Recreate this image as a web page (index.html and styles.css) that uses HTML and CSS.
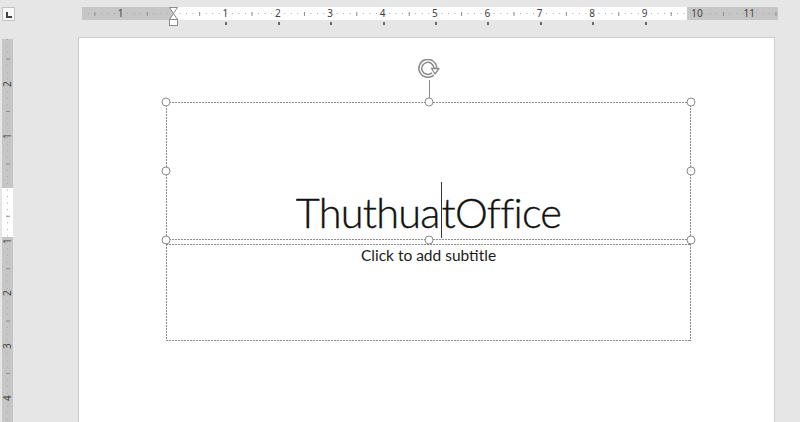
FILE: index.html
```html
<!DOCTYPE html>
<html lang="en">
<head>
    <meta charset="UTF-8">
    <title>ThuthuatOffice</title>
    <link rel="stylesheet" href="styles.css">
</head>
<body>
    <div class="top">
        <div class="corner"><span class="corner-mark"></span></div>
        <div class="hruler-wrap">
            <div class="hruler">
                <div class="hnums">
                    <span>1</span><span></span><span>1</span><span>2</span><span>3</span><span>4</span><span>5</span>
                    <span>6</span><span>7</span><span>8</span><span>9</span><span>10</span><span>11</span>
                </div>
            </div>
            <div class="tabs">
                <span></span><span></span><span></span><span></span><span></span><span></span><span></span><span></span><span></span>
            </div>
            <svg class="indent" width="11" height="20" viewBox="0 0 11 20">
                <path d="M1.5 0.5 H9.5 L5.5 6.5 Z M5.5 6.5 L9.5 12.5 H1.5 Z" fill="#fff" stroke="#8a8a8a" stroke-width="1"/>
                <rect x="1.5" y="12.5" width="8" height="6" fill="#fff" stroke="#8a8a8a" stroke-width="1"/>
            </svg>
        </div>
    </div>

    <div class="main">
        <div class="vruler">
            <div class="vnums">
                <span>2</span><span>1</span><span></span><span>1</span><span>2</span><span>3</span><span>4</span>
            </div>
        </div>

        <div class="page">
            <div class="title-box dash">
                <div class="title-text">Thuthua<span class="caret"></span>tOffice</div>

                <div class="rotate">
                    <svg width="24" height="22" viewBox="0 0 24 22">
                        <path d="M15.8 15 A7.5 7.5 0 1 1 18.3 8.8" fill="none" stroke="#8a8a8a" stroke-width="4.4"/>
                        <path d="M15.8 15 A7.5 7.5 0 1 1 18.3 8.8" fill="none" stroke="#fff" stroke-width="1.4"/>
                        <path d="M14.5 9.5 L22 9.5 L18 15 Z" fill="#fff" stroke="#8a8a8a" stroke-width="1.3" stroke-linejoin="round"/>
                    </svg>
                </div>
                <div class="stem"></div>

                <span class="handle h-tl"></span>
                <span class="handle h-tc"></span>
                <span class="handle h-tr"></span>
                <span class="handle h-ml"></span>
                <span class="handle h-mr"></span>
                <span class="handle h-bl"></span>
                <span class="handle h-bc"></span>
                <span class="handle h-br"></span>
            </div>

            <div class="subtitle-box dash">
                <div class="subtitle-text">Click to add subtitle</div>
            </div>
        </div>
    </div>
</body>
</html>
```

FILE: styles.css
```css
body {
    margin: 0;
    background-color: #e6e6e6;
    font-family: "Noto Sans", "Open Sans", sans-serif;
    height: 422px;
    overflow: hidden;
}

/* ---------- top ruler ---------- */

.top {
    display: flex;
    height: 37px;
}

.corner {
    width: 11px;
    height: 12px;
    margin: 7px 0 0 2px;
    border: 1px solid #c4c4c4;
    background-color: #f7f7f7;
    display: flex;
    align-items: center;
    justify-content: center;
}

.corner-mark {
    width: 4px;
    height: 4px;
    border-left: 2px solid #444;
    border-bottom: 2px solid #444;
    margin: 1px 0 0 1px;
}

.hruler-wrap {
    position: relative;
    margin: 7px 0 0 67px;
    width: 696px;
}

.hruler {
    height: 13px;
    background-image:
        linear-gradient(to right, #8e8e8e 0 1px, transparent 1px),
        linear-gradient(to right, #a4a4a4 0 1px, transparent 1px),
        linear-gradient(to right, #c6c6c6 0 91px, #fff 91px 605px, #c6c6c6 605px);
    background-size: 52.4px 4px, 6.55px 1px, 100% 100%;
    background-position: 12.4px 4.5px, 5.85px 6px, 0 0;
    background-repeat: repeat-x, repeat-x, no-repeat;
}

.hnums {
    display: flex;
    padding-left: 12.4px;
    height: 13px;
}

.hnums span {
    flex: 0 0 52.4px;
    display: flex;
    justify-content: center;
    font-size: 10px;
    line-height: 13px;
    color: #444;
}

.tabs {
    display: flex;
    padding-left: 117.2px;
    height: 6px;
}

.tabs span {
    flex: 0 0 52.4px;
    display: flex;
    justify-content: center;
    padding-top: 2px;
}

.tabs span::after {
    content: "";
    width: 2px;
    height: 3px;
    background-color: #6a6a6a;
    margin-left: 2px;
}

.indent {
    position: absolute;
    left: 86px;
    top: 0;
}

/* ---------- left ruler ---------- */

.main {
    display: flex;
}

.vruler {
    width: 11px;
    height: 400px;
    margin: 2px 0 0 2px;
    background-image:
        linear-gradient(#8e8e8e 0 1px, transparent 1px),
        linear-gradient(#a4a4a4 0 1px, transparent 1px),
        linear-gradient(#c6c6c6 0 149px, #fff 149px 198px, #c6c6c6 198px);
    background-size: 4px 52.4px, 1px 6.55px, 100% 100%;
    background-position: 3.5px 19.6px, 5px 0, 0 0;
    background-repeat: repeat-y, repeat-y, no-repeat;
}

.vnums {
    display: flex;
    flex-direction: column;
    padding-top: 18.8px;
}

.vnums span {
    flex: 0 0 52.4px;
    display: flex;
    align-items: center;
    justify-content: center;
    font-size: 10px;
    color: #444;
    transform: rotate(-90deg);
}

/* ---------- slide page ---------- */

.page {
    margin-left: 65px;
    width: 697px;
    height: 400px;
    background-color: #fff;
    border: 1px solid #cdcdcd;
    border-bottom: none;
    padding: 64px 0 0 87px;
    box-sizing: border-box;
    font-family: Lato, "Open Sans", sans-serif;
}

.dash {
    background:
        repeating-linear-gradient(90deg, #8a8a8a 0 2px, transparent 2px 3px) left top / 100% 1px no-repeat,
        repeating-linear-gradient(90deg, #8a8a8a 0 2px, transparent 2px 3px) left bottom / 100% 1px no-repeat,
        repeating-linear-gradient(180deg, #8a8a8a 0 2px, transparent 2px 3px) left top / 1px 100% no-repeat,
        repeating-linear-gradient(180deg, #8a8a8a 0 2px, transparent 2px 3px) right top / 1px 100% no-repeat;
}

.title-box {
    position: relative;
    width: 525px;
    height: 138px;
    box-sizing: border-box;
    display: flex;
    align-items: flex-end;
    justify-content: center;
    padding-bottom: 2px;
}

.title-text {
    font-size: 41.5px;
    font-weight: 300;
    line-height: 52px;
    color: #111;
    letter-spacing: -0.8px;
    -webkit-text-stroke: 0.35px #111;
}

.caret {
    display: inline-block;
    width: 1px;
    height: 56px;
    margin: 0 -0.5px 0 1.5px;
    background-color: #333;
    vertical-align: -10px;
}

.subtitle-box {
    width: 525px;
    height: 97px;
    margin-top: 4px;
    box-sizing: border-box;
    text-align: center;
    padding-top: 2px;
}

.subtitle-text {
    font-size: 15.5px;
    color: #1a1a1a;
}

/* ---------- selection handles ---------- */

.handle {
    position: absolute;
    width: 7px;
    height: 7px;
    border: 1.5px solid #8c8c8c;
    border-radius: 50%;
    background-color: #fff;
    transform: translate(-50%, -50%);
}

.h-tl { left: 0; top: 0; }
.h-tc { left: 50%; top: 0; }
.h-tr { left: 100%; top: 0; }
.h-ml { left: 0; top: 50%; }
.h-mr { left: 100%; top: 50%; }
.h-bl { left: 0; top: 100%; }
.h-bc { left: 50%; top: 100%; }
.h-br { left: 100%; top: 100%; }

.rotate {
    position: absolute;
    left: 50%;
    top: -43px;
    margin-left: -12px;
    line-height: 0;
}

.stem {
    position: absolute;
    left: 50%;
    top: -22px;
    width: 1px;
    height: 18px;
    background-color: #8c8c8c;
}
```
